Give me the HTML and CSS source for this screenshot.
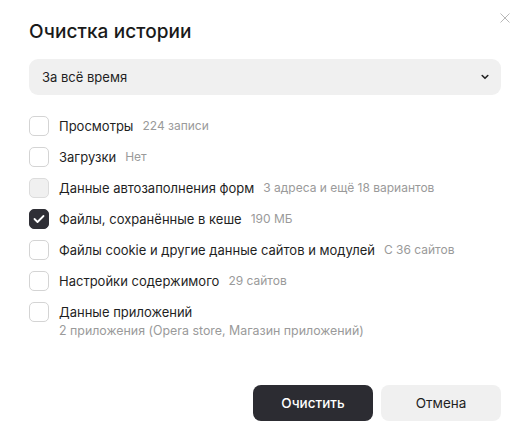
FILE: index.html
```html
<!DOCTYPE html>
<html lang="ru">
<head>
<meta charset="utf-8">
<link rel="stylesheet" href="styles.css">
</head>
<body>
<div class="dialog">
  <button class="close" aria-label="Закрыть">
    <svg width="10" height="10" viewBox="0 0 10 10"><path d="M0.5 0.5L9.5 9.5M9.5 0.5L0.5 9.5" stroke="#b8b8b8" stroke-width="1" fill="none"/></svg>
  </button>
  <h1 class="title">Очистка истории</h1>
  <div class="select">
    <span>За всё время</span>
    <svg width="8" height="6" viewBox="0 0 8 6"><path d="M1.2 1.5L4 4.3L6.8 1.5" stroke="#222" stroke-width="1.6" fill="none" stroke-linecap="round" stroke-linejoin="round"/></svg>
  </div>
  <ul class="list">
    <li class="item"><span class="box"></span><span class="label">Просмотры</span><span class="note">224 записи</span></li>
    <li class="item"><span class="box"></span><span class="label">Загрузки</span><span class="note">Нет</span></li>
    <li class="item"><span class="box disabled"></span><span class="label">Данные автозаполнения форм</span><span class="note">3 адреса и ещё 18 вариантов</span></li>
    <li class="item"><span class="box checked"><svg width="12" height="10" viewBox="0 0 12 10"><path d="M1.5 5L4.5 8L10.5 2" stroke="#fff" stroke-width="1.8" fill="none" stroke-linecap="round" stroke-linejoin="round"/></svg></span><span class="label">Файлы, сохранённые в кеше</span><span class="note">190 МБ</span></li>
    <li class="item"><span class="box"></span><span class="label">Файлы cookie и другие данные сайтов и модулей</span><span class="note">С 36 сайтов</span></li>
    <li class="item"><span class="box"></span><span class="label">Настройки содержимого</span><span class="note">29 сайтов</span></li>
    <li class="item multi"><span class="box"></span><div class="stack"><span class="label">Данные приложений</span><span class="note sub">2 приложения (Opera store, Магазин приложений)</span></div></li>
  </ul>
  <div class="actions">
    <button class="btn primary">Очистить</button>
    <button class="btn secondary">Отмена</button>
  </div>
</div>
</body>
</html>
```
FILE: styles.css
```css
* { box-sizing: border-box; }
html, body { margin: 0; padding: 0; background: #fff; }
body {
  font-family: Inter, "Noto Sans", "Liberation Sans", sans-serif;
  color: #1f1f1f;
  width: 526px;
  height: 446px;
  overflow: hidden;
}
.dialog {
  position: relative;
  padding: 20px 25px 0 29px;
}
.close {
  position: absolute;
  top: 13px;
  right: 16px;
  border: 0;
  background: none;
  padding: 0;
  width: 10px;
  height: 10px;
  display: flex;
}
.title {
  margin: 0;
  font-size: 19px;
  font-weight: 500;
  line-height: 24px;
  letter-spacing: 0.1px;
  color: #1a1a1a;
}
.select {
  margin-top: 15px;
  height: 36px;
  background: #f0f0f0;
  border-radius: 9px;
  display: flex;
  align-items: center;
  justify-content: space-between;
  padding: 0 12px 0 13px;
  font-size: 13px;
  color: #1f1f1f;
}
.list {
  list-style: none;
  margin: 21px 0 0;
  padding: 0;
  display: flex;
  flex-direction: column;
  gap: 11px;
}
.item {
  display: flex;
  align-items: center;
  height: 20px;
  font-size: 13px;
}
.item.multi { align-items: flex-start; height: auto; }
.box {
  width: 20px;
  height: 20px;
  border: 1px solid #d4d4d4;
  border-radius: 5px;
  background: #fff;
  flex: none;
  margin-right: 10px;
  display: flex;
  align-items: center;
  justify-content: center;
}
.box.disabled { background: #f0f0f0; border-color: #dcdcdc; }
.box.checked { background: #2f2f36; border-color: #2f2f36; }
.label { color: #1f1f1f; line-height: 20px; }
.note {
  color: #9a9a9a;
  font-size: 12px;
  margin-left: 9px;
  line-height: 20px;
}
.stack { display: flex; flex-direction: column; }
.note.sub { margin-left: 0; margin-top: 0; line-height: 18px; font-size: 12.4px; }
.actions {
  margin-top: 45px;
  display: flex;
  justify-content: flex-end;
  gap: 8px;
}
.btn {
  width: 120px;
  height: 36px;
  border: 0;
  border-radius: 8px;
  font-family: inherit;
  font-size: 13.5px;
}
.btn.primary { background: #2c2c32; color: #fff; font-weight: 500; }
.btn.secondary { background: #f0f0f0; color: #1f1f1f; }
```
